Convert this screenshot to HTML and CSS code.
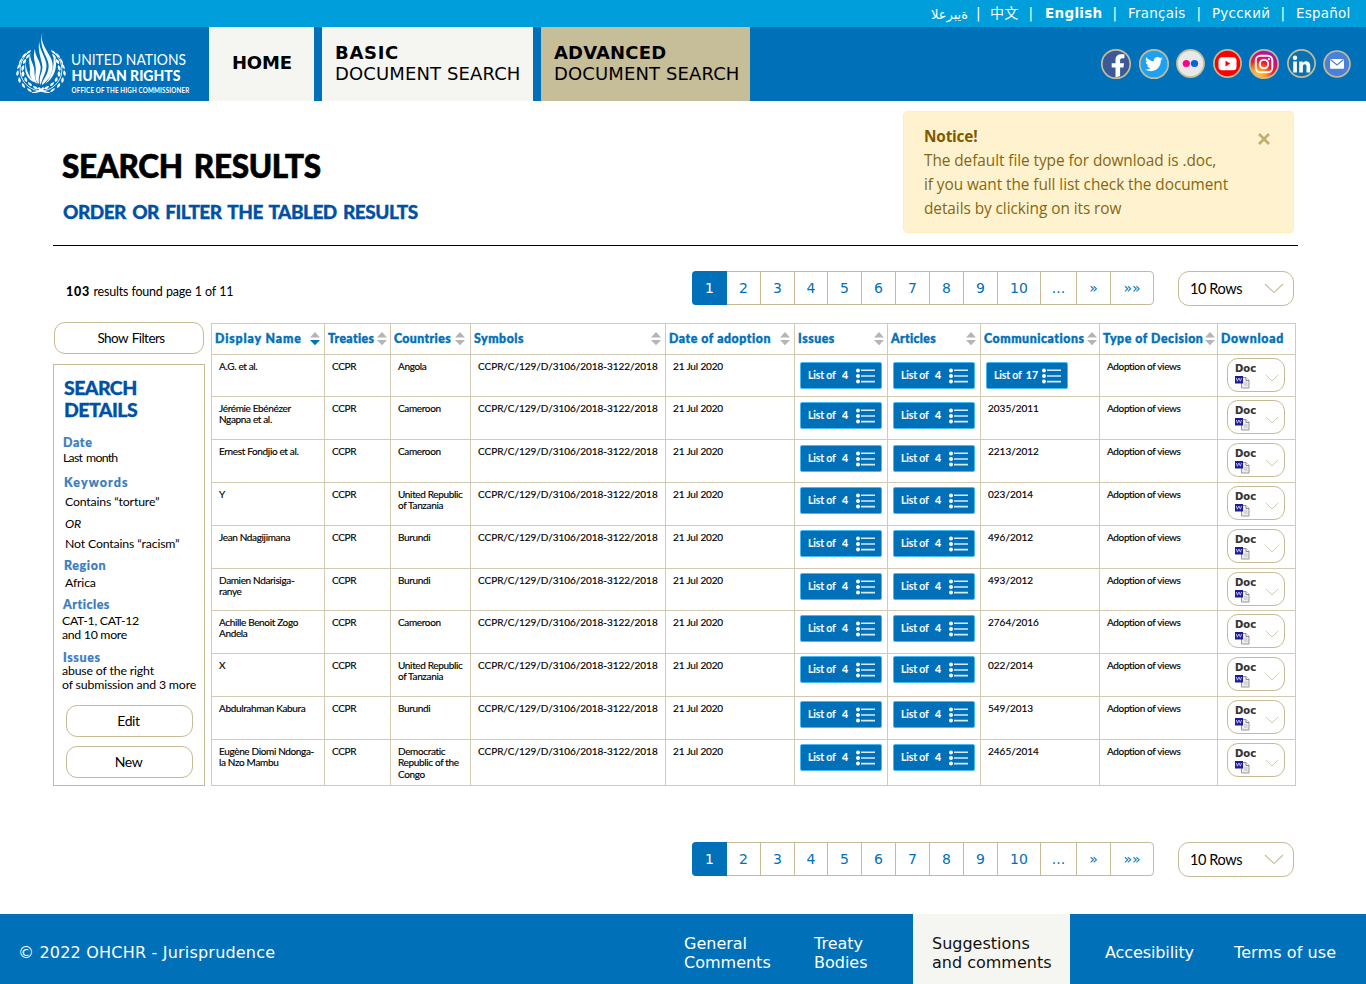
FILE: index.html
```html
<!DOCTYPE html>
<html lang="en">
<head>
<meta charset="utf-8">
<title>OHCHR - Jurisprudence</title>
<link rel="stylesheet" href="styles.css">
</head>
<body>
<svg class="defs" width="0" height="0">
  <symbol id="list" viewBox="0 0 20 16"><g fill="#fff"><circle cx="2" cy="2.4" r="2"/><circle cx="2" cy="8" r="2"/><circle cx="2" cy="13.5" r="2"/><path d="M5 1.5h14v1.6H5zM5 7.2h14v1.6H5zM5 12.8h14v1.6H5z" opacity=".85"/></g></symbol>
  <symbol id="chev" viewBox="0 0 20 11"><path d="M1 1l9 8.6L19 1" fill="none" stroke="currentColor" stroke-width="1.1"/></symbol>
  <symbol id="word" viewBox="0 0 15 14"><path d="M6.500 2.500h4.500l3 3v7.500h-7.500z" fill="#eee" stroke="#999"/><path d="M11 2.500v3h3" fill="#fff" stroke="#888"/><path d="M9 8h3.500M9 10h3.500" stroke="#bbb"/><path d="M0 1h8v7.500H0z" fill="#1c1c94"/><path d="M1.300 3l1.100 3.200 1.500-3.200 1.500 3.200 1.100-3.200" fill="none" stroke="#c9c9f4" stroke-width=".9"/></symbol>
</svg>

<div class="langs">
  <bdo dir="ltr" class="arabic">العربية</bdo><i>|</i><span class="zh">中文</span><i>|</i><b>English</b><i>|</i><span class="fr">Français</span><i>|</i><span class="ru">Русский</span><i>|</i><span class="es">Español</span>
</div>

<header class="header">
  <svg class="logo" width="196" height="74" viewBox="0 27 196 74">
    <defs>
      <g id="leaves">
        <path d="M1 20C-9 20-17 14-20 5C-23-6-18-14-12-19" fill="none" stroke="#fff" stroke-width=".9"/>
        <g fill="#fff">
          <path d="M-10-21q-4 1-5 4q4 0 5-4zM-15-18q-4 2-4 5q4-1 4-5zM-19-13q-3 2-3 6q3-2 3-6zM-21-8q-3 3-3 6q4-1 3-6zM-23-1q-3 3-1 6q3-2 1-6zM-22 6q-2 4 1 6q2-3-1-6zM-19 12q-1 4 3 5q0-4-3-5zM-14 17q1 4 5 4q-1-3-5-4z"/>
          <path d="M-11-17q-1 4-4 5q0-4 4-5zM-15-12q1 4-3 5q-1-4 3-5zM-17-6q1 4-2 6q-2-4 2-6zM-18 0q3 3 0 6q-3-3 0-6zM-16 6q3 2 2 5q-4-1-2-5zM-13 11q4 1 4 4q-4 0-4-4zM-8 15q4 0 5 3q-4 1-5-3z"/>
          <path d="M-9 21q6 0 11-5l1.500 1.500q-5 5-12 4.500z"/>
        </g>
      </g>
    </defs>
    <use href="#leaves" transform="translate(41 71)"/>
    <use href="#leaves" transform="translate(41 71) scale(-1 1)"/>
    <g fill="#fff" transform="translate(0 .3) scale(.3333)">
      <path d="M124 98C123 130 138 145 152 172C168 205 150 238 126 254C124 240 146 226 146 196C146 170 118 150 124 98z"/>
      <path d="M118 122C116 145 134 165 139 190C142 215 126 232 122 254C112 232 130 215 127 196C124 175 112 150 118 122z"/>
      <path d="M105 145C104 165 120 180 122 200C122 222 112 232 118 252C98 235 110 220 107 200C104 180 98 165 105 145z"/>
      <path d="M91 158C88 178 102 192 103 208C104 226 104 238 114 251C92 240 88 226 90 208C90 192 84 176 91 158z"/>
      <path d="M78 184C76 205 84 225 104 246C82 238 70 214 78 184z"/>
      <path d="M160 160C174 185 172 224 136 251C156 225 164 200 160 160z"/>
    </g>
    <g fill="#fff" font-family="Lato">
      <text x="71" y="64.500" font-size="16" font-weight="400" textLength="115" lengthAdjust="spacingAndGlyphs">UNITED NATIONS</text>
      <text x="71.500" y="80.500" font-size="15.500" font-weight="900" textLength="109" lengthAdjust="spacingAndGlyphs">HUMAN RIGHTS</text>
      <g transform="translate(71.500 93) scale(.74 1)"><text font-size="8.400" font-weight="700" textLength="159" lengthAdjust="spacing">OFFICE OF THE HIGH COMMISSIONER</text></g>
    </g>
  </svg>
  <nav class="tabs">
    <a class="tab home"><b>HOME</b></a>
    <a class="tab basic"><b>BASIC</b><span>DOCUMENT SEARCH</span></a>
    <a class="tab advanced"><b>ADVANCED</b><span>DOCUMENT SEARCH</span></a>
  </nav>
  <svg class="social" width="254" height="34" viewBox="1099 47 254 34">
    <defs>
      <radialGradient id="insta" cx=".25" cy="1" r="1.1"><stop offset="0" stop-color="#ffd54a"/><stop offset=".3" stop-color="#ff9a20"/><stop offset=".55" stop-color="#f01830"/><stop offset=".8" stop-color="#c4128f"/><stop offset="1" stop-color="#6a2bc8"/></radialGradient>
    </defs>
    <g stroke="#c5bb96" stroke-width="1.700">
      <circle cx="1116" cy="64" r="14.200" fill="#3b5998"/>
      <circle cx="1154" cy="64" r="14.200" fill="#1da1f2"/>
      <circle cx="1190.500" cy="63.500" r="13.600" fill="#e6e8ea"/>
      <circle cx="1227.500" cy="63.500" r="13.600" fill="#f00"/>
      <circle cx="1264" cy="64" r="14.200" fill="url(#insta)"/>
      <circle cx="1301.500" cy="63.500" r="13.600" fill="#0a72b0"/>
      <circle cx="1337" cy="64" r="13" fill="#4a80d9"/>
    </g>
    <path d="M1115.500 77.300V67.500h-3.800v-4.300h3.800v-3c0-4.200 2.300-6 6-6h2.900v4.100h-2c-1.800 0-2.300.8-2.300 2.200v2.700h4l-.7 4.300h-3.300v8.700z" fill="#fff"/>
    <path d="M1162.800 58.600c-.7.300-1.300.5-2 .6.700-.5 1.300-1.200 1.500-2-.7.400-1.500.7-2.300.9-2.400-2.500-6.600-.8-6.200 3-3 0-5.700-1.500-7.500-3.900-1 1.800-.4 3.900 1.200 4.900-.6 0-1.200-.2-1.700-.4.100 1.800 1.200 3.200 2.900 3.600-.5.200-1.100.2-1.700.1.500 1.500 1.800 2.500 3.500 2.600-1.600 1.200-3.500 1.700-5.400 1.500 7.300 4.500 16-.4 15.700-8.900.8-.5 1.500-1.200 2-2z" fill="#fff"/>
    <circle cx="1186.300" cy="63.500" r="3.600" fill="#ff0084"/><circle cx="1194.500" cy="63.500" r="3.600" fill="#0063dc"/>
    <rect x="1218.500" y="57.300" width="18" height="13" rx="3.500" fill="#fff"/><path d="M1225.500 60.800l4.800 2.800-4.800 2.800z" fill="#f00"/>
    <g fill="none" stroke="#fff" stroke-width="2"><rect x="1255.800" y="55.800" width="16.500" height="16.500" rx="4.500"/><circle cx="1264" cy="64" r="4.200"/></g><circle cx="1268.900" cy="59.200" r="1.100" fill="#fff"/>
    <g fill="#fff"><circle cx="1295" cy="57.800" r="2.200"/><path d="M1293.200 61.500h3.700v11h-3.700zM1299.200 61.500h3.500v1.600c1.800-3 7.500-2.600 7.500 2.700v6.700h-3.700v-5.900c0-3.200-3.600-2.800-3.600.1v5.800h-3.700z"/></g>
    <rect x="1330" y="59" width="14" height="9.800" rx=".8" fill="#fff"/><path d="M1330.500 59.500l6.500 5.500 6.500-5.500" fill="none" stroke="#4a80d9" stroke-width="1.100"/>
  </svg>
</header>

<main class="main">
  <section class="intro">
    <div class="titles">
      <h1>SEARCH RESULTS</h1>
      <h2>ORDER OR FILTER THE TABLED RESULTS</h2>
    </div>
    <div class="notice">
      <p><b>Notice!</b><br>The default file type for download is .doc,<br>if you want the full list check the document<br>details by clicking on its row</p>
      <svg width="12" height="12" viewBox="0 0 12 12"><path d="M1 1l10 10M11 1L1 11" stroke="#c0ae6d" stroke-width="2.600"/></svg>
    </div>
  </section>

  <div class="toolbar top">
    <p class="found"><b>103</b> results found page 1 of 11</p>
    <div class="pages"></div>
    <button class="pill rows">10 Rows<svg width="20" height="11"><use href="#chev"/></svg></button>
  </div>

  <div class="results">
    <aside>
      <button class="pill show">Show Filters</button>
      <div class="panel">
        <h3>SEARCH<br>DETAILS</h3>
        <h4 class="date">Date</h4>
        <p class="month">Last month</p>
        <h4 class="keywords">Keywords</h4>
        <p class="kw">Contains “torture”</p>
        <p class="kw or"><em>OR</em></p>
        <p class="kw">Not Contains “racism”</p>
        <h4 class="region">Region</h4>
        <p class="africa">Africa</p>
        <h4 class="articles">Articles</h4>
        <p class="cat">CAT-1, CAT-12<br>and 10 more</p>
        <h4 class="issues">Issues</h4>
        <p class="abuse">abuse of the right<br>of submission and 3 more</p>
        <button class="pill">Edit</button>
        <button class="pill">New</button>
      </div>
    </aside>
    <div class="table">
      <div class="row head"></div>
    </div>
  </div>

  <div class="toolbar bottom">
    <div class="pages"></div>
    <button class="pill rows">10 Rows<svg width="20" height="11"><use href="#chev"/></svg></button>
  </div>
</main>

<footer class="footer">
  <p>© 2022 OHCHR - Jurisprudence</p>
  <a class="general">General<br>Comments</a>
  <a class="treaty">Treaty<br>Bodies</a>
  <a class="suggest">Suggestions<br>and comments</a>
  <a class="access">Accesibility</a>
  <a class="terms">Terms of use</a>
</footer>
<script src="app.js"></script>
</body>
</html>
```
FILE: styles.css
```css
* { box-sizing: border-box; }
body { margin: 0; width: 1366px; height: 984px; background: #fff; color: #000; font-family: "DejaVu Sans", Verdana, sans-serif; overflow: hidden; }
h1, h2, h3, h4, p { margin: 0; }
.defs { position: absolute; }
svg { display: block; flex: none; }

.langs { height: 27px; background: #009edb; color: #fff; display: flex; justify-content: flex-end; padding-right: 15px; font-size: 13.5px; line-height: 27px; letter-spacing: .22px; white-space: nowrap; }
.langs i { font-style: normal; width: 26px; text-align: center; }
.langs .arabic { font-size: 13px; line-height: 29px; width: 38px; letter-spacing: 0; }
.langs .arabic + i { width: 19px; }
.langs .zh { font-family: "Noto Sans CJK SC", sans-serif; font-size: 14px; line-height: 25px; width: 28px; margin-left: 2px; }
.langs b { letter-spacing: .3px; width: 58px; margin-left: 1px; margin-right: -1px; }
.langs .fr, .langs .ru { width: 58px; }
.langs .es { width: 55px; }

.header { height: 74px; background: #0070b8; display: flex; }
.logo { margin-right: 13px; overflow: visible; }
.tabs { display: flex; gap: 8px; }
.tab { height: 74px; background: #f5f5f1; display: flex; flex-direction: column; justify-content: center; font-size: 18px; line-height: 21px; padding: 0 0 2px 13px; white-space: nowrap; }
.tab.home { width: 105px; padding: 0 0 4px 23px; }
.tab.basic { width: 211px; }
.tab.advanced { width: 209px; background: #c6bd99; }
.tab b { letter-spacing: -.2px; }
.tab.basic b { letter-spacing: .7px; }
.tab.advanced b { letter-spacing: .15px; }
.tab span { letter-spacing: .12px; }
.social { margin: 20px 13px 0 auto; }

.main { height: 813px; padding: 10px 68px 0 53px; font-family: Lato, sans-serif; }
.intro { height: 135px; border-bottom: 1px solid #000; display: flex; justify-content: space-between; padding-right: 4px; }
.titles { padding: 35px 0 0 9px; white-space: nowrap; }
h1 { font-size: 31.5px; line-height: 40px; font-weight: 900; letter-spacing: -.35px; word-spacing: 4px; -webkit-text-stroke: .6px; }
h2 { font-size: 19px; line-height: 24px; font-weight: 900; color: #0051a5; margin: 14px 0 0 1px; letter-spacing: -.5px; word-spacing: 2.2px; -webkit-text-stroke: .3px; }
.notice { width: 391px; height: 122px; border: 1px solid #ffeeba; border-radius: 4px; background: #fff2cf; color: #856710; font: 15.4px/24px "Open Sans", sans-serif; padding: 13px 23px 0 20px; display: flex; justify-content: space-between; white-space: nowrap; letter-spacing: -.07px; }
.notice b { color: #7d5a00; letter-spacing: -.2px; }
.notice svg { margin-top: 8px; }

.toolbar { display: flex; align-items: flex-start; height: 76px; padding: 25px 4px 0 0; justify-content: flex-end; }
.found { margin: 12px auto 0 13px; font-size: 12.5px; line-height: 18px; letter-spacing: -.22px; word-spacing: .4px; }
.found b { font-weight: 900; letter-spacing: .8px; }
.pages { display: flex; width: 462px; height: 34px; border: 1px solid #c5bb96; border-radius: 4px; font: 14px/32px "DejaVu Sans", sans-serif; color: #0070b8; }
.pages a { width: 34px; text-align: center; border-right: 1px solid #c5bb96; flex: none; }
.pages a:first-child { background: #0070b8; color: #fff; margin: -1px 0 -1px -1px; width: 35px; line-height: 34px; border: 0; border-radius: 4px 0 0 4px; }
.pages a:nth-child(4) { width: 33px; }
.pages a:nth-child(10) { width: 43px; }
.pages a:nth-child(11) { width: 36px; }
.pages a:last-child { border: 0; width: 42px; }
.pill { display: flex; align-items: center; justify-content: center; border: 1px solid #c5bb96; border-radius: 11px; background: #fff; height: 32px; padding: 0; font: 14px/20px Lato, sans-serif; letter-spacing: -.4px; color: #000; }
.rows { width: 116px; height: 35px; justify-content: space-between; padding: 0 9px 0 11px; margin-left: 24px; font-size: 14.5px; }
.rows svg { color: #c5bb96; }

.results { display: flex; height: 464px; gap: 6px; }
aside { width: 152px; font-size: 12.3px; line-height: 14px; letter-spacing: -.16px; }
.show { width: 150px; margin: 0 0 10px 1px; padding-left: 4px; font-size: 13.5px; letter-spacing: -.55px; word-spacing: 1px; }
.panel { height: 422px; border: 1px solid #c5bb96; padding: 12px 0 0 9px; white-space: nowrap; }
h3 { font-size: 19.5px; line-height: 22px; font-weight: 900; color: #0051a5; margin-left: 1px; letter-spacing: -.55px; -webkit-text-stroke: .3px; }
h4 { font-size: 12.5px; line-height: 16px; font-weight: 900; color: #3a7dbd; letter-spacing: .6px; -webkit-text-stroke: .2px; }
.date { margin-top: 14px; }
.month { letter-spacing: -.75px; word-spacing: 1.5px; }
.keywords { margin: 10px 0 0 1px; letter-spacing: 1.1px; }
.kw { margin: 4px 0 0 2px; }
.or { margin-top: 8px; }
.or + .kw { margin-top: 6px; }
.region { margin: 7px 0 0 1px; }
.africa { margin: 2px 0 0 2px; }
.articles { margin-top: 7px; letter-spacing: .5px; }
.cat { margin: 1px 0 0 -1px; letter-spacing: -.3px; }
.issues { margin-top: 8px; }
.abuse { margin: -2px 0 0 -1px; }
.panel .pill { width: 127px; margin: 13px 0 0 3px; padding-right: 2px; }
.panel .pill + .pill { margin-top: 9px; }

.table { width: 1085px; border: solid #d3cbb1; border-width: 1px 0 0 1px; height: 463px; margin-top: 1px; font-size: 10px; line-height: 11.4px; }
.row { display: grid; grid-template-columns: 113px 66px 80px 195px 129px 93px 93px 119px 118px 78px; height: 43px; }
.row > * { border: solid #d3cbb1; border-width: 0 1px 1px 0; padding: 6px 0 0 7px; white-space: nowrap; letter-spacing: -.35px; -webkit-text-stroke: .15px; min-width: 0; }
.row.head { height: 31px; }
.row.head > * { display: flex; align-items: center; justify-content: space-between; font-size: 12.3px; font-weight: 900; color: #0070b8; padding: 0 4px 0 3px; letter-spacing: .57px; -webkit-text-stroke: .4px; }
.row.head > :first-child { letter-spacing: .9px; }
.row.head > :nth-child(3) { padding-right: 5px; letter-spacing: .4px; }
.row.head > :nth-child(2), .row.head > :nth-child(7) { letter-spacing: .35px; }
.row.head > :nth-child(2), .row.head > :nth-child(6) { padding-right: 3px; }
.row.head > :nth-child(8), .row.head > :nth-child(9) { padding-right: 2px; }
.row.head > :nth-child(10) { letter-spacing: .8px; }
.up, .down { fill: #b5b5b5; }
.down.active { fill: #0070b8; }
.row:nth-child(2), .row:nth-child(7) { height: 42px; }
.row:last-child { height: 46px; }
.row .sym { letter-spacing: -.03px; }
.row .num { letter-spacing: 0; }
.row .date21 { letter-spacing: -.15px; }
.row .act { padding: 0 0 0 5px; }
.listbtn { display: flex; align-items: center; width: 82px; height: 27px; border: 1px solid #45baf2; border-radius: 2px; background: #0070b8; color: #fff; font-size: 10.5px; font-weight: 600; padding: 1px 5px 0 7px; letter-spacing: -.15px; }
.listbtn b { width: 15px; text-align: right; font-weight: 700; margin: 0 auto 0 -1px; }
.listbtn span { width: 26px; }
.listbtn .wide { width: 17px; letter-spacing: 0; margin-left: 1px; }
.listbtn svg { margin-top: -1px; }
.row .dl { padding: 3px 0 0 9px; }
.doc { display: flex; justify-content: space-between; width: 58px; height: 34px; border: 1px solid #c5bb96; border-radius: 11px; padding: 4px 5px 0 7px; font: bold 10px/12px "DejaVu Sans", sans-serif; letter-spacing: 0; color: #333; }
.doc > svg { color: #c5bb96; margin-top: 6px; }

.bottom { height: auto; padding-top: 56px; }

.footer { height: 70px; background: #0070b8; color: #fff; display: flex; font-size: 16px; line-height: 19px; white-space: nowrap; }
.footer p { margin: 29px 0 0 18px; width: 666px; letter-spacing: .2px; }
.footer a { padding-top: 20px; }
.general { width: 130px; }
.treaty { width: 99px; }
.footer .suggest { width: 157px; padding-left: 19px; background: #f5f5f1; color: #111; }
.footer .access { width: 129px; margin-left: 35px; padding-top: 29px; letter-spacing: -.1px; }
.footer .terms { padding-top: 29px; letter-spacing: .1px; }
```
FILE: app.js
```js
const pageLabels = ['1', '2', '3', '4', '5', '6', '7', '8', '9', '10', '...', '»', '»»'];
document.querySelectorAll('.pages').forEach(el => {
  el.innerHTML = pageLabels.map(p => `<a>${p}</a>`).join('');
});

const heads = ['Display Name', 'Treaties', 'Countries', 'Symbols', 'Date of adoption', 'Issues', 'Articles', 'Communications', 'Type of Decision', 'Download'];
const sortIcon = i => `<svg width="10" height="14" viewBox="0 0 10 14"><path class="up" d="M5 0l5 5.600H0z"/><path class="down${i ? '' : ' active'}" d="M0 8h10l-5 5.200z"/></svg>`;
document.querySelector('.head').innerHTML = heads.map((h, i) => `<div>${h}${i < 9 ? sortIcon(i) : ''}</div>`).join('');

// name, country, communication, top offset of the list buttons
const rows = [
  ['A.G. et al.', 'Angola', null, 7],
  ['Jérémie Ebénézer<br>Ngapna et al.', 'Cameroon', '2035/2011', 5],
  ['Ernest Fondjio et al.', 'Cameroon', '2213/2012', 5],
  ['Y', 'United Republic<br>of Tanzania', '023/2014', 4],
  ['Jean Ndagijimana', 'Burundi', '496/2012', 4],
  ['Damien Ndarisiga-<br>ranye', 'Burundi', '493/2012', 4],
  ['Achille Benoit Zogo<br>Andela', 'Cameroon', '2764/2016', 4],
  ['X', 'United Republic<br>of Tanzania', '022/2014', 2],
  ['Abdulrahman Kabura', 'Burundi', '549/2013', 4],
  ['Eugène Diomi Ndonga-<br>la Nzo Mambu', 'Democratic<br>Republic of the<br>Congo', '2465/2014', 4]
];
const button = (n, top) => `<div class="act" style="padding-top:${top}px"><div class="listbtn"><span>List of</span><b class="${n > 9 ? 'wide' : ''}">${n}</b><svg width="20" height="16"><use href="#list"/></svg></div></div>`;
const doc = '<div class="dl"><div class="doc"><div>Doc<svg class="file" width="15" height="14"><use href="#word"/></svg></div><svg width="14" height="18"><use href="#chev"/></svg></div></div>';
document.querySelector('.table').insertAdjacentHTML('beforeend', rows.map(([name, country, comm, top]) => `<div class="row">
  <div>${name}</div><div>CCPR</div><div>${country}</div><div class="sym">CCPR/C/129/D/3106/2018-3122/2018</div><div class="date21">21 Jul 2020</div>
  ${button(4, top)}${button(4, top)}${comm ? `<div class="num">${comm}</div>` : button(17, top)}<div>Adoption of views</div>${doc}</div>`).join(''));
```
